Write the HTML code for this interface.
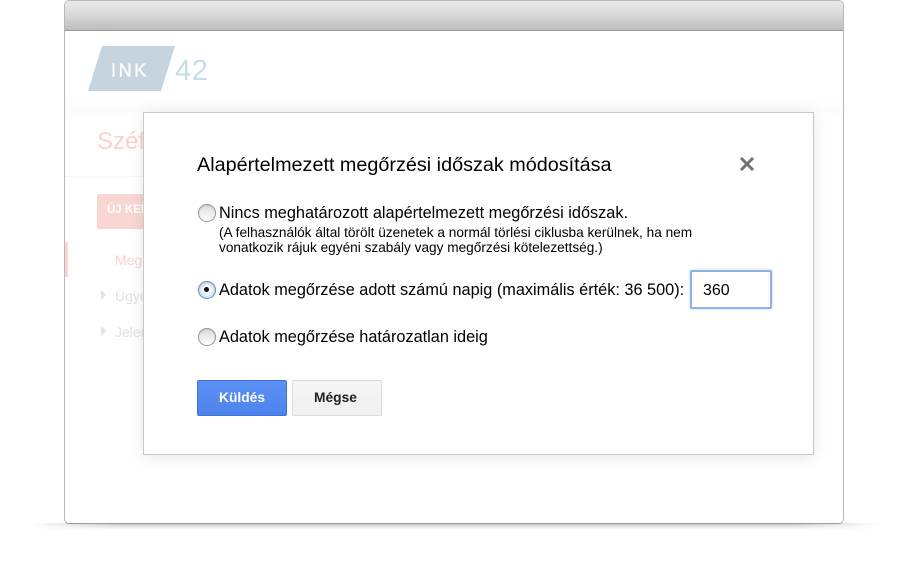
<!DOCTYPE html>
<html>
<head>
<meta charset="utf-8">
<style>
html,body{margin:0;padding:0;background:#fff;}
body{width:920px;height:578px;position:relative;overflow:hidden;font-family:"Liberation Sans",sans-serif;color:#000;}
.abs{position:absolute;white-space:nowrap;}
#shadow{position:absolute;left:30px;top:523px;width:850px;height:7px;background:linear-gradient(rgba(0,0,0,.26),rgba(0,0,0,.08) 60%,transparent);-webkit-mask-image:linear-gradient(90deg,transparent,#000 10%,#000 90%,transparent);mask-image:linear-gradient(90deg,transparent,#000 10%,#000 90%,transparent);}
#win{position:absolute;left:64px;top:0;width:778px;height:522px;border:1px solid #b8b8b8;border-bottom-color:#9c9c9c;border-radius:5px;background:#fff;overflow:hidden;}
#bar{position:absolute;left:0;top:0;width:100%;height:29px;background:linear-gradient(#e9e9e9,#dcdcdc 40%,#bdbdbd);border-bottom:1px solid #9a9a9a;}
#fade{position:absolute;left:0;top:100px;width:100%;height:14px;background:linear-gradient(#fff,#fbfbfb 70%,#fff);}
#dlg{position:absolute;left:143px;top:112px;width:669px;height:341px;background:#fff;border:1px solid #c8c8c8;box-shadow:0 2px 14px rgba(0,0,0,.1);}
.r{position:absolute;width:15.5px;height:15.5px;border-radius:50%;border:1px solid #999;background:linear-gradient(#dcdcdc,#fff);box-shadow:inset 0 1px 2px rgba(0,0,0,.1);}
.t{font-size:16.3px;line-height:18px;}
.s{font-size:13.65px;line-height:15px;}
</style>
</head>
<body>
<div id="shadow"></div>
<div id="win">
  <div id="bar"></div>
  <div id="fade"></div>
</div>

<svg class="abs" style="left:85px;top:44px" width="130" height="50">
  <polygon points="17,2 90,2 76,47 3,47" fill="#c6d4df"/>
  <text x="26" y="32.5" font-family="Liberation Sans" font-size="18" letter-spacing="2.6" fill="#fff" stroke="#fff" stroke-width=".35">INK</text>
  <text x="90" y="36" font-family="Liberation Sans" font-size="29" letter-spacing=".6" fill="#c4dde7">42</text>
</svg>

<div class="abs" style="left:97px;top:128px;font-size:24px;color:#fad2cd">Széf</div>
<div class="abs" style="left:65px;top:176px;width:78px;height:1px;background:#f8f8f8"></div>
<div class="abs" style="left:97px;top:194px;width:60px;height:35px;background:#f9d6d1;border-radius:2px"></div>
<div class="abs" style="left:107px;top:204px;font-size:11.5px;font-weight:bold;color:#fff">ÚJ KERESÉS</div>
<div class="abs" style="left:65px;top:242px;width:3px;height:35px;background:#fbd6d1"></div>
<div class="abs" style="left:115px;top:252px;font-size:14px;color:#fad2cd">Megőrzés</div>
<div class="abs" style="left:101px;top:290px;width:0;height:0;border-left:5px solid #e2e2e2;border-top:5px solid transparent;border-bottom:5px solid transparent"></div>
<div class="abs" style="left:115px;top:288px;font-size:14px;color:#e0e0e0">Ügyek</div>
<div class="abs" style="left:101px;top:326px;width:0;height:0;border-left:5px solid #e2e2e2;border-top:5px solid transparent;border-bottom:5px solid transparent"></div>
<div class="abs" style="left:115px;top:324px;font-size:14px;color:#e0e0e0">Jelentések</div>

<div id="dlg"></div>

<div class="abs" style="left:197px;top:154px;font-size:19.8px;line-height:23px">Alapértelmezett megőrzési időszak módosítása</div>
<svg class="abs" style="left:738px;top:155px" width="18" height="18"><path d="M3 3L15 15M15 3L3 15" stroke="#707070" stroke-width="3" fill="none"/></svg>

<div class="r" style="left:198px;top:204px"></div>
<div class="abs t" style="left:219px;top:204px">Nincs meghatározott alapértelmezett megőrzési időszak.</div>
<div class="abs s" style="left:219px;top:225px">(A felhasználók által törölt üzenetek a normál törlési ciklusba kerülnek, ha nem</div>
<div class="abs s" style="left:219px;top:240px">vonatkozik rájuk egyéni szabály vagy megőrzési kötelezettség.)</div>

<div class="r" style="left:198px;top:281px;border-color:#6f8fbd;background:radial-gradient(circle,#fff 25%,#b4cef2 90%)"></div>
<div class="abs" style="left:204px;top:287px;width:5px;height:5px;border-radius:50%;background:#111"></div>
<div class="abs t" style="left:219px;top:281px">Adatok megőrzése adott számú napig (maximális érték: 36 500):</div>

<div class="abs" style="left:690px;top:270px;width:78px;height:35px;background:#fff;border:2px solid #8fb4e3;border-radius:2px;box-shadow:0 0 2px #a9c7ee"></div>
<div class="abs" style="left:703px;top:282px;font-size:16px;line-height:18px">360</div>

<div class="r" style="left:198px;top:328px"></div>
<div class="abs t" style="left:219px;top:328px">Adatok megőrzése határozatlan ideig</div>

<div class="abs" style="left:197px;top:380px;width:88px;height:34px;background:linear-gradient(#5b90f4,#4e83ec);border:1px solid #3d73d8;border-radius:2px;color:#fff;font-size:13.8px;font-weight:bold;line-height:34px;text-align:center">Küldés</div>
<div class="abs" style="left:292px;top:380px;width:88px;height:34px;background:linear-gradient(#f6f6f6,#f0f0f0);border:1px solid #dcdcdc;border-radius:2px;color:#222;font-size:13.8px;font-weight:bold;line-height:34px;text-align:center;text-indent:-3px">Mégse</div>
</body>
</html>
